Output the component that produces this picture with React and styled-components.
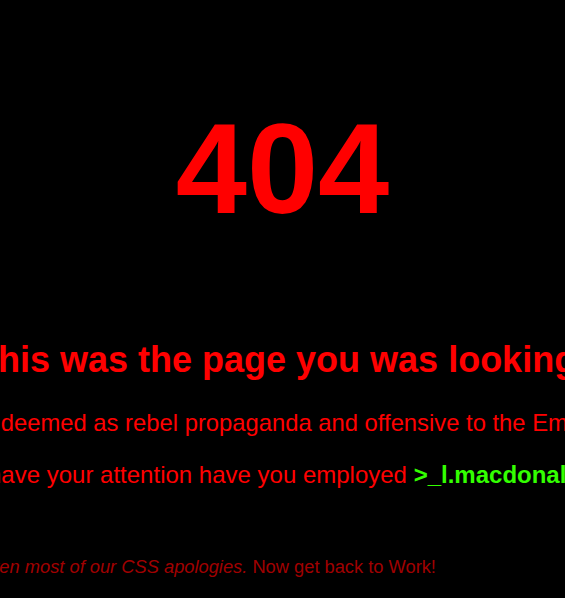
import React from "react";
import styled, { createGlobalStyle } from "styled-components";

const Global = createGlobalStyle`
  html, body {
    margin: 0;
    padding: 0;
    background: #000;
    overflow: hidden;
  }
  body {
    font-family: "Liberation Sans", Arial, sans-serif;
  }
`;

const Page = styled.main`
  display: flex;
  justify-content: center;
  min-height: 100vh;
  width: 100vw;
  overflow: hidden;
  background: #000;
`;

const Column = styled.section`
  flex: 0 0 701px;
  width: 701px;
  display: flex;
  flex-direction: column;
  padding-top: 105px;
  color: #ff0000;
`;

const Code = styled.h1`
  margin: 0;
  font-size: 128px;
  line-height: 128px;
  font-weight: 700;
  text-align: center;
`;

const Headline = styled.h2`
  margin: 109px 0 0;
  font-size: 36px;
  line-height: 36px;
  font-weight: 700;
  white-space: nowrap;
  text-indent: ${(p) => p.$shift || 0}px;
`;

const Line = styled.p`
  margin: ${(p) => p.$gap}px 0 0;
  font-size: ${(p) => p.$size}px;
  line-height: ${(p) => p.$size}px;
  white-space: nowrap;
  color: ${(p) => (p.$dim ? "#a00000" : "#ff0000")};
  text-indent: ${(p) => p.$shift || 0}px;
`;

const Handle = styled.strong`
  color: #33ff00;
  font-weight: 700;
`;

const Aside = styled.em`
  font-style: italic;
`;

export default function App() {
  return (
    <Page>
      <Global />
      <Column>
        <Code>404</Code>
        <Headline $shift={-2}>So this was the page you was looking for.</Headline>
        <Line $size={23.8} $gap={33}>
          It was deemed as rebel propaganda and offensive to the Empire.
        </Line>
        <Line $size={24} $gap={28}>
          Did I have your attention have you employed <Handle>&gt;_l.macdonald</Handle>?
        </Line>
        <Line $size={18.3} $gap={71} $dim $shift={-12}>
          <Aside>We've taken most of our CSS apologies.</Aside> Now get back to Work!
        </Line>
      </Column>
    </Page>
  );
}
